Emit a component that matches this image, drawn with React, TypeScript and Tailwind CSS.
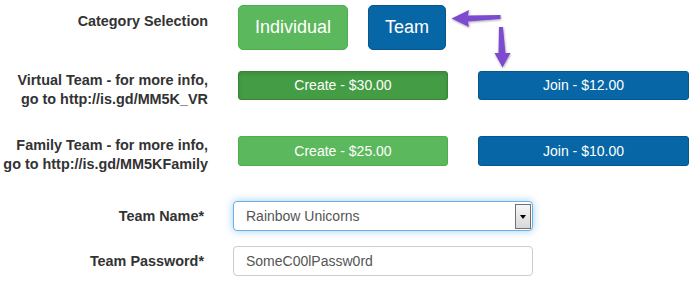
import React from "react"

const labelCls = "w-[208px] shrink-0 text-right text-[14.4px] leading-[19px] font-bold text-[#333]"

function Arrows() {
    return (
        <svg className="absolute left-0 top-0 pointer-events-none" width="694" height="282">
            <defs>
                <filter id="sh" x="-20%" y="-20%" width="140%" height="140%">
                    <feDropShadow dx="0.5" dy="1" stdDeviation="0.8" floodColor="#000" floodOpacity="0.35" />
                </filter>
            </defs>
            <g fill="#7c4ccf" filter="url(#sh)">
                {/* left arrow */}
                <path d="M500.5 15 L468 15.5 L469 10 L451.5 18.5 L469 27 L468 21.5 L500.5 19 Z" />
                {/* down arrow */}
                <path d="M499 27 L498.5 53 L494.5 53 L502.5 67.5 L510.5 53 L505.5 53 L503 27 Z" />
            </g>
        </svg>
    )
}

export default function App() {
    return (
        <div className="relative w-[694px] h-[282px] bg-white overflow-hidden font-['Liberation_Sans',Arial,sans-serif]">
            <div className="flex flex-col pt-[5px]">
                {/* Category */}
                <div className="flex items-start h-[45px]">
                    <div className={`${labelCls} pt-[7px]`}>Category Selection</div>
                    <div className="flex gap-5 ml-[30px]">
                        <button type="button" className="w-[110px] h-[45px] rounded-[5px] bg-[#5cb85c] border border-[#4cae4c] text-white text-[18px]">
                            Individual
                        </button>
                        <button type="button" className="w-[78px] h-[45px] rounded-[5px] bg-[#0767a6] border border-[#05578d] text-white text-[18px]">
                            Team
                        </button>
                    </div>
                </div>

                {/* Virtual team */}
                <div className="flex items-start mt-[21px] h-[65px]">
                    <div className={labelCls}>
                        Virtual Team - for more info,<br />go to http://is.gd/MM5K_VR
                    </div>
                    <div className="flex gap-[30px] ml-[30px]">
                        <button type="button" className="w-[210px] h-[29px] rounded-[3px] bg-[#449d44] border border-[#398439] text-white text-[14px] shadow-[inset_0_2px_4px_rgba(0,0,0,0.12)]">
                            Create - $30.00
                        </button>
                        <button type="button" className="w-[211px] h-[29px] rounded-[3px] bg-[#0767a6] border border-[#05578d] text-white text-[14px]">
                            Join - $12.00
                        </button>
                    </div>
                </div>

                {/* Family team */}
                <div className="flex items-start h-[65px]">
                    <div className={labelCls}>
                        Family Team - for more info,<br />go to http://is.gd/MM5KFamily
                    </div>
                    <div className="flex gap-[30px] ml-[30px]">
                        <button type="button" className="w-[210px] h-[30px] rounded-[3px] bg-[#5cb85c] border border-[#4cae4c] text-white text-[14px]">
                            Create - $25.00
                        </button>
                        <button type="button" className="w-[211px] h-[30px] rounded-[3px] bg-[#0767a6] border border-[#05578d] text-white text-[14px]">
                            Join - $10.00
                        </button>
                    </div>
                </div>

                {/* Team name */}
                <div className="flex items-center h-[30px]">
                    <div className={`${labelCls} pr-[4px]`}>Team Name*</div>
                    <div className="relative ml-[25px] w-[300px] h-[30px] rounded-[4px] border border-[#66afe9] shadow-[0_0_8px_rgba(102,175,233,0.6)] bg-white flex items-center pl-[12px] text-[14px] text-[#555]">
                        Rainbow Unicorns
                        <div className="absolute right-[1px] top-[2px] w-[16px] h-[25px] border border-[#707070] bg-gradient-to-b from-[#f6f6f6] to-[#d8d8d8] flex items-center justify-center">
                            <div className="w-0 h-0 border-l-[3.5px] border-r-[3.5px] border-t-[4px] border-l-transparent border-r-transparent border-t-black" />
                        </div>
                    </div>
                </div>

                {/* Password */}
                <div className="flex items-center mt-[15px] h-[30px]">
                    <div className={`${labelCls} pr-[4px]`}>Team Password*</div>
                    <div className="ml-[25px] w-[300px] h-[30px] rounded-[4px] border border-[#ccc] bg-white flex items-center pl-[12px] text-[14px] text-[#555]">
                        SomeC00lPassw0rd
                    </div>
                </div>
            </div>
            <Arrows />
        </div>
    )
}
